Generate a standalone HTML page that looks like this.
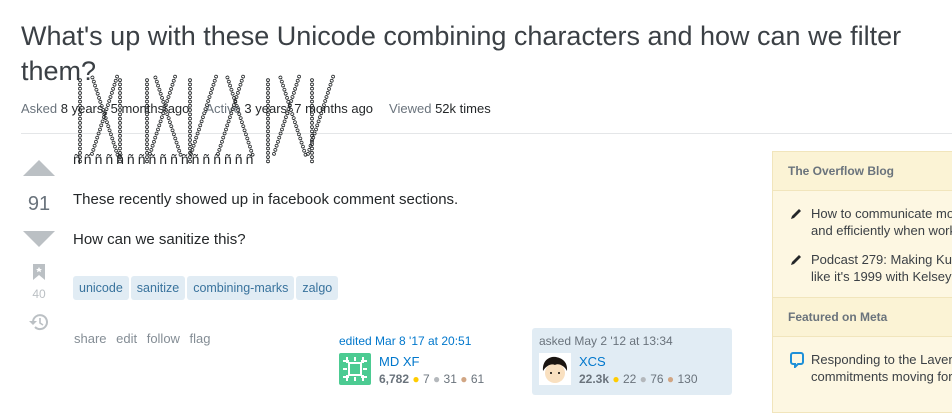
<!DOCTYPE html>
<html><head><meta charset="utf-8"><style>
body{margin:0;width:952px;height:400px;overflow:hidden;background:#fff;font-family:"Liberation Sans",Arial,sans-serif;position:relative;color:#242729}
.a{position:absolute}
h1{position:absolute;left:21px;top:19px;margin:0;font-weight:normal;font-size:27px;line-height:35px;color:#3b4045;width:920px}
.meta{left:21px;top:101px;font-size:13px;color:#6a737c}
.meta b{font-weight:normal;color:#242729;margin-right:16px}
.tag{display:inline-block;background:#e1ecf4;color:#39739d;font-size:12.5px;padding:5px 6px;border-radius:3px;margin-right:2px}
.gray{color:#848d95;font-size:13px}
.side{left:772px;top:151px;width:190px;height:260px;background:#fdf7e2;border:1px solid #f1e5bc}
.sh{height:38px;border-bottom:1px solid #f1e5bc;font-weight:bold;color:#6a737c;font-size:12px;line-height:38px;padding-left:15px;background:#fbf3d5}
.si{background:#fdf7e2;font-size:13px;color:#3b4045;line-height:17px;padding-left:38px;position:relative}
.pen{position:absolute;left:17px;width:13px;height:13px}
</style></head><body>
<h1>What's up with these Unicode combining characters and how can we filter them?</h1>
<div class="a meta">Asked <b>8 years, 5 months ago</b>Active <b>3 years, 7 months ago</b>Viewed <b>52k times</b></div>
<div class="a" style="left:21px;top:133px;width:931px;height:1px;background:#e4e6e8"></div>
<svg class="a" style="left:70px;top:66px" width="270" height="100" font-family="Liberation Sans" font-size="7" font-weight="bold" fill="#242729">
<g>
<text transform="translate(8,12) rotate(90)">oooooooooooooooooooo</text>
<text transform="translate(20,10) rotate(72)">oooooooooooooooooooo</text>
<text transform="translate(46,8) rotate(108)">oooooooooooooooooooo</text>
<text transform="translate(48,12) rotate(90)">oooooooooooooooooooo</text>
<text transform="translate(75,12) rotate(90)">oooooooooooooooooooo</text>
<text transform="translate(83,10) rotate(72)">oooooooooooooooooooo</text>
<text transform="translate(104,8) rotate(108)">oooooooooooooooooooo</text>
<text transform="translate(118,12) rotate(90)">oooooooooooooooooooo</text>
<text transform="translate(145,8) rotate(108)">oooooooooooooooooooo</text>
<text transform="translate(155,10) rotate(72)">oooooooooooooooooooo</text>
<text transform="translate(172,8) rotate(108)">oooooooooooooooooooo</text>
<text transform="translate(196,12) rotate(90)">oooooooooooooooooooo</text>
<text transform="translate(208,10) rotate(72)">oooooooooooooooooooo</text>
<text transform="translate(228,8) rotate(108)">oooooooooooooooooooo</text>
<text transform="translate(240,12) rotate(90)">oooooooooooooooooooo</text>
<text transform="translate(262,8) rotate(108)">oooooooooooooooooooo</text>
</g>
<text x="3" y="98" font-size="14" font-weight="normal" letter-spacing="3">ñññññññññññññññññ</text>
</svg>
<svg class="a" style="left:23px;top:160px" width="32" height="18"><path d="M0 16L16 0L32 16Z" fill="#bbc0c4"/></svg>
<div class="a" style="left:23px;top:193px;width:32px;text-align:center;font-size:20px;color:#6a737c">91</div>
<svg class="a" style="left:23px;top:231px" width="32" height="18"><path d="M0 0L32 0L16 16Z" fill="#bbc0c4"/></svg>
<svg class="a" style="left:33px;top:264px" width="12" height="16"><path d="M0 0H12V16L6 11L0 16Z" fill="#bbc0c4"/><path d="M6 3l1 2h2l-1.5 1.3.5 2-2-1.2-2 1.2.5-2L3 5h2z" fill="#fff"/></svg>
<div class="a" style="left:23px;top:287px;width:32px;text-align:center;font-size:12px;color:#bbc0c4">40</div>
<svg class="a" style="left:29px;top:313px" width="20" height="18"><path d="M4 9a7 7 0 1 1 2 5" fill="none" stroke="#bbc0c4" stroke-width="2"/><path d="M0 8h8l-4 4z" fill="#bbc0c4"/><path d="M11 5v5l3 2" fill="none" stroke="#bbc0c4" stroke-width="1.6"/></svg>
<div class="a" style="left:73px;top:191px;font-size:15px">These recently showed up in facebook comment sections.</div>
<div class="a" style="left:73px;top:231px;font-size:15px">How can we sanitize this?</div>
<div class="a" style="left:73px;top:276px"><span class="tag">unicode</span><span class="tag">sanitize</span><span class="tag">combining-marks</span><span class="tag">zalgo</span></div>
<div class="a gray" style="left:74px;top:331px;word-spacing:6px">share edit follow flag</div>
<div class="a" style="left:339px;top:334px;font-size:12px;color:#0077cc">edited Mar 8 '17 at 20:51</div>
<svg class="a" style="left:339px;top:353px" width="32" height="32"><rect width="32" height="32" rx="2" fill="#4ccb92"/><g fill="none" stroke="#fff" stroke-width="2"><rect x="10" y="10" width="12" height="12"/><path d="M4 8h6M22 8h6M4 24h6M22 24h6M8 4v6M24 4v6M8 22v6M24 22v6M16 4v4M16 24v4M4 16h4M24 16h4"/></g></svg>
<div class="a" style="left:379px;top:354px;font-size:13px;color:#0077cc">MD XF</div>
<div class="a" style="left:379px;top:372px;font-size:12px;color:#6a737c"><b>6,782</b> <span style="color:#ffcc01">●</span> 7 <span style="color:#b4b8bc">●</span> 31 <span style="color:#d1a684">●</span> 61</div>
<div class="a" style="left:532px;top:328px;width:200px;height:67px;background:#e1ecf4;border-radius:3px"></div>
<div class="a" style="left:539px;top:334px;font-size:12px;color:#6a737c">asked May 2 '12 at 13:34</div>
<svg class="a" style="left:539px;top:353px" width="32" height="32"><rect width="32" height="32" fill="#fff"/><ellipse cx="16" cy="20" rx="10" ry="10" fill="#f9e0c0"/><path d="M4 18C3 6 12 3 17 4s12 4 11 14c-3-6-9-8-12-6-4-2-9 1-12 6z" fill="#1a1410"/><circle cx="12" cy="20" r="1" fill="#000"/><circle cx="20" cy="20" r="1" fill="#000"/></svg>
<div class="a" style="left:579px;top:354px;font-size:13px;color:#0077cc">XCS</div>
<div class="a" style="left:579px;top:372px;font-size:12px;color:#6a737c"><b>22.3k</b> <span style="color:#ffcc01">●</span> 22 <span style="color:#b4b8bc">●</span> 76 <span style="color:#d1a684">●</span> 130</div>
<div class="a side">
<div class="sh">The Overflow Blog</div>
<div class="si" style="padding-top:14px;padding-bottom:6px;white-space:nowrap"><svg class="pen" style="top:16px" viewBox="0 0 13 13"><path d="M1 12l1-3 7-7 2 2-7 7z" fill="#242729"/></svg>How to communicate mo<br>and efficiently when work</div>
<div class="si" style="padding-top:6px;padding-bottom:12px;white-space:nowrap"><svg class="pen" style="top:8px" viewBox="0 0 13 13"><path d="M1 12l1-3 7-7 2 2-7 7z" fill="#242729"/></svg>Podcast 279: Making Ku<br>like it's 1999 with Kelsey</div>
<div class="sh" style="border-top:1px solid #f1e5bc">Featured on Meta</div>
<div class="si" style="padding-top:14px;padding-bottom:14px;white-space:nowrap"><svg class="pen" style="top:15px;width:14px;height:16px" viewBox="0 0 14 16"><path d="M3 1h8a2 2 0 0 1 2 2v7a2 2 0 0 1-2 2H8l-3 3v-3H3a2 2 0 0 1-2-2V3a2 2 0 0 1 2-2z" fill="none" stroke="#1e90d8" stroke-width="2"/></svg>Responding to the Laven<br>commitments moving for</div>
</div>
</body></html>
